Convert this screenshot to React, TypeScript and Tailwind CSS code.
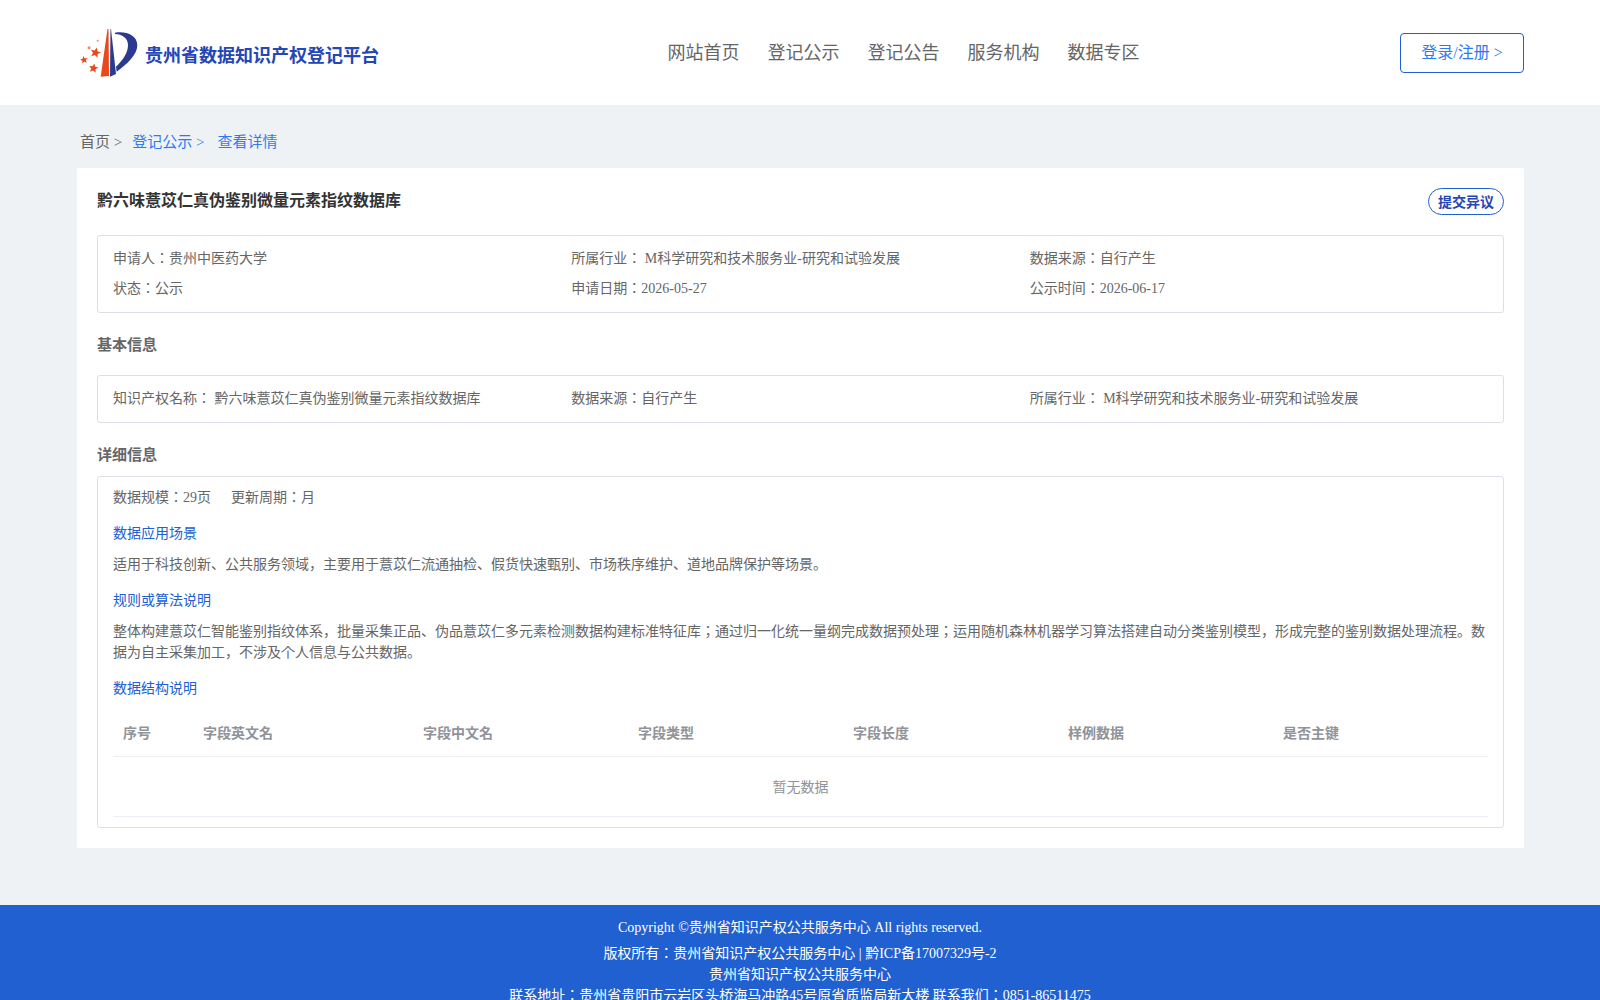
const navItems = ["网站首页", "登记公示", "登记公告", "服务机构", "数据专区"];
const columns = ["序号", "字段英文名", "字段中文名", "字段类型", "字段长度", "样例数据", "是否主键"];

function Star({ x, y, r, tilt = 0 }: { x: number; y: number; r: number; tilt?: number }) {
  const points = Array.from({ length: 10 }, (_, i) => {
    const radius = i % 2 === 0 ? r : r * 0.45;
    const angle = ((i * 36 - 90 + tilt) * Math.PI) / 180;
    return `${x + radius * Math.cos(angle)},${y + radius * Math.sin(angle)}`;
  }).join(" ");
  return <polygon points={points} fill="#e8481c" />;
}

function Logo() {
  return (
    <svg width="60" height="52" viewBox="0 0 60 52" className="shrink-0">
      <path d="M20.700 49.700 L27.500 2 L28.500 2 L29 49 Z" fill="#e8481c" />
      <path d="M30.500 2 L31 2 L36 47 L30 49.700 Z" fill="#2b3a8f" />
      <path
        d="M35 5.700 C46 4 57 8 57.300 18 C57.500 28 46 38 36.700 44.700 L36 39.700 C43 33 48 26 48 18 C48 11 42 7 35 7 Z"
        fill="#2b3a8f"
      />
      <Star x={15.500} y={25.700} r={5.500} tilt={15} />
      <Star x={4} y={33} r={4} tilt={-10} />
      <Star x={13.500} y={41.300} r={5} tilt={10} />
      <circle cx="9" cy="20.700" r="1.500" fill="#f08a5d" />
      <circle cx="17.700" cy="13.700" r="1" fill="#f08a5d" />
    </svg>
  );
}

function Header() {
  return (
    <header className="h-[105px] bg-white pl-[80px] pr-[76px] flex items-center justify-between">
      <div className="flex items-center w-[420px] gap-[5px] pt-[1px]">
        <Logo />
        <span className="text-[18px] font-bold text-[#2546b5] mt-[6px]">贵州省数据知识产权登记平台</span>
      </div>
      <nav className="flex gap-[28px] text-[18px] text-[#666] -ml-[93px] pt-[1px]">
        {navItems.map((item) => (
          <a key={item} href="#">
            {item}
          </a>
        ))}
      </nav>
      <a
        href="#"
        className="w-[124px] h-[40px] flex items-center justify-center border border-[#2060d0] rounded pt-[1px] text-[16px] text-[#2f7bee]"
      >
        登录/注册 &gt;
      </a>
    </header>
  );
}

function SubTitle({ children }: { children: string }) {
  return <h3 className="text-[15px] font-bold text-[#666]">{children}</h3>;
}

function BlueTitle({ children }: { children: string }) {
  return <p className="text-[14px] text-[#2060d0] leading-[21px]">{children}</p>;
}

export default function App() {
  return (
    <div
      className="min-h-screen bg-[#eff2f5] text-[14px] text-[#666]"
      style={{ fontFamily: '"Liberation Serif", "Noto Sans CJK JP", serif' }}
    >
      <Header />

      <main className="pl-[77px] pr-[76px]">
        {/* 面包屑 */}
        <div className="h-[63px] flex items-center pl-[3px] text-[15px] pt-[12px]">
          <span className="text-[#666]">首页 &gt;</span>
          <span className="ml-[10px] text-[#2f7bee]">登记公示 &gt;</span>
          <span className="ml-[13px] text-[#2f7bee]">查看详情</span>
        </div>

        <div className="bg-white px-[20px] pt-[20px] pb-[20px] h-[680px]">
          <div className="flex items-start justify-between h-[47px]">
            <h1 className="text-[16px] font-bold text-[#333] leading-[24px] pt-[1px]">黔六味薏苡仁真伪鉴别微量元素指纹数据库</h1>
            <button className="w-[76px] h-[27px] border border-[#2060d0] rounded-[14px] pt-[1px] text-[14px] font-bold text-[#2546b5] bg-white">
              提交异议
            </button>
          </div>

          <div className="h-[78px] border border-[#dcdfe6] rounded-[3px] px-[15px] pb-[2px] grid grid-cols-3 content-center gap-y-[9px] leading-[21px]">
            <span>申请人：贵州中医药大学</span>
            <span>所属行业： M科学研究和技术服务业-研究和试验发展</span>
            <span>数据来源：自行产生</span>
            <span>状态：公示</span>
            <span>申请日期：2026-05-27</span>
            <span>公示时间：2026-06-17</span>
          </div>

          <div className="h-[62px] flex items-center pt-[3px]">
            <SubTitle>基本信息</SubTitle>
          </div>

          <div className="h-[48px] border border-[#dcdfe6] rounded-[3px] px-[15px] pb-[2px] grid grid-cols-3 items-center">
            <span>知识产权名称： 黔六味薏苡仁真伪鉴别微量元素指纹数据库</span>
            <span>数据来源：自行产生</span>
            <span>所属行业： M科学研究和技术服务业-研究和试验发展</span>
          </div>

          <div className="h-[53px] flex items-center pt-[11px]">
            <SubTitle>详细信息</SubTitle>
          </div>

          <div className="h-[352px] border border-[#dcdfe6] rounded-[3px] px-[15px] pt-[10px] leading-[21px]">
            <div className="flex gap-[20px]">
              <span>数据规模：29页</span>
              <span>更新周期：月</span>
            </div>
            <div className="mt-[15px]">
              <BlueTitle>数据应用场景</BlueTitle>
            </div>
            <p className="mt-[10px]">
              适用于科技创新、公共服务领域，主要用于薏苡仁流通抽检、假货快速甄别、市场秩序维护、道地品牌保护等场景。
            </p>
            <div className="mt-[15px]">
              <BlueTitle>规则或算法说明</BlueTitle>
            </div>
            <p className="mt-[10px]">
              整体构建薏苡仁智能鉴别指纹体系，批量采集正品、伪品薏苡仁多元素检测数据构建标准特征库；通过归一化统一量纲完成数据预处理；运用随机森林机器学习算法搭建自动分类鉴别模型，形成完整的鉴别数据处理流程。数据为自主采集加工，不涉及个人信息与公共数据。
            </p>
            <div className="mt-[15px]">
              <BlueTitle>数据结构说明</BlueTitle>
            </div>

            <div className="mt-[12px] h-[46px] grid grid-cols-[80px_220px_repeat(5,215px)] items-center border-b border-[#ebeef5] font-bold text-[#909399]">
              {columns.map((col) => (
                <span key={col} className="pl-[10px]">
                  {col}
                </span>
              ))}
            </div>
            <div className="h-[60px] pt-[1px] flex items-center justify-center border-b border-[#ebeef5] text-[#909399]">
              暂无数据
            </div>
          </div>
        </div>
      </main>

      <footer className="mt-[57px] bg-[#2060d0] text-white text-center pt-[12px] pb-[12px] leading-[21px]">
        <p>Copyright ©贵州省知识产权公共服务中心 All rights reserved.</p>
        <p className="mt-[5px]">版权所有：贵州省知识产权公共服务中心 | 黔ICP备17007329号-2</p>
        <p>贵州省知识产权公共服务中心</p>
        <p>联系地址：贵州省贵阳市云岩区头桥海马冲路45号原省质监局新大楼 联系我们：0851-86511475</p>
      </footer>
    </div>
  );
}
